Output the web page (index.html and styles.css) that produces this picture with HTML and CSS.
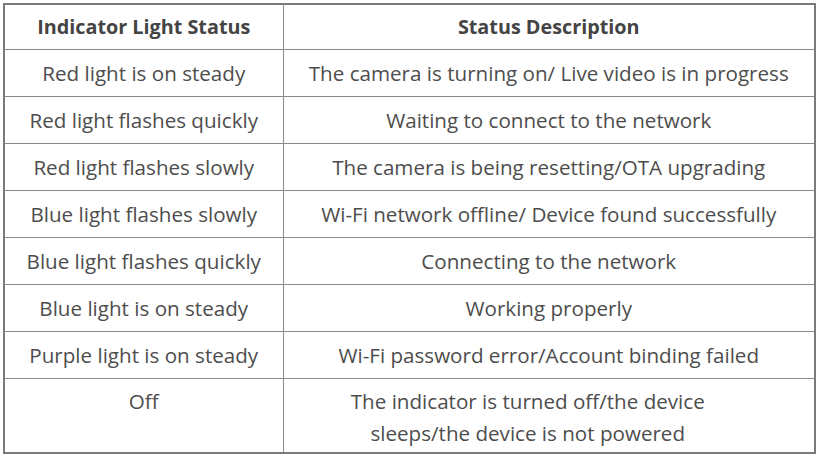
FILE: index.html
```html
<!DOCTYPE html>
<html>
<head>
<meta charset="utf-8">
<link rel="stylesheet" href="styles.css">
</head>
<body>
<table class="status-table">
  <colgroup>
    <col class="col-left">
    <col class="col-right">
  </colgroup>
  <thead>
    <tr class="row">
      <th>Indicator Light Status</th>
      <th>Status Description</th>
    </tr>
  </thead>
  <tbody>
    <tr class="row"><td>Red light is on steady</td><td>The camera is turning on/ Live video is in progress</td></tr>
    <tr class="row"><td>Red light flashes quickly</td><td>Waiting to connect to the network</td></tr>
    <tr class="row"><td>Red light flashes slowly</td><td>The camera is being resetting/OTA upgrading</td></tr>
    <tr class="row"><td>Blue light flashes slowly</td><td>Wi-Fi network offline/ Device found successfully</td></tr>
    <tr class="row"><td>Blue light flashes quickly</td><td>Connecting to the network</td></tr>
    <tr class="row"><td>Blue light is on steady</td><td>Working properly</td></tr>
    <tr class="row"><td>Purple light is on steady</td><td>Wi-Fi password error/Account binding failed</td></tr>
    <tr class="row last"><td>Off</td><td class="multi">The indicator is turned off/the device<br>sleeps/the device is not powered</td></tr>
  </tbody>
</table>
</body>
</html>
```

FILE: styles.css
```css
html, body {
  margin: 0;
  padding: 0;
  background: #ffffff;
}
body {
  padding: 3px 0 0 3px;
  font-family: "Open Sans", "Liberation Sans", sans-serif;
  color: #4d4d4d;
}
.status-table {
  border-collapse: collapse;
  width: 811px;
  table-layout: fixed;
  border: 2px solid #7a7a7a;
}
.col-left { width: 279px; }
.col-right { width: 532px; }
.status-table th,
.status-table td {
  border: 1.5px solid #8a8a8a;
  text-align: center;
  vertical-align: middle;
  padding: 0;
  font-size: 20.6px;
  line-height: 32px;
  height: 46px;
  white-space: nowrap;
}
.status-table th {
  font-weight: 700;
  font-size: 19.8px;
  color: #444444;
  height: 44px;
}
.status-table td {
  font-weight: 400;
}
.row.last td {
  vertical-align: top;
  height: 67px;
  padding-top: 6px;
}
.row.last td.multi {
  padding-right: 42px;
}
```
